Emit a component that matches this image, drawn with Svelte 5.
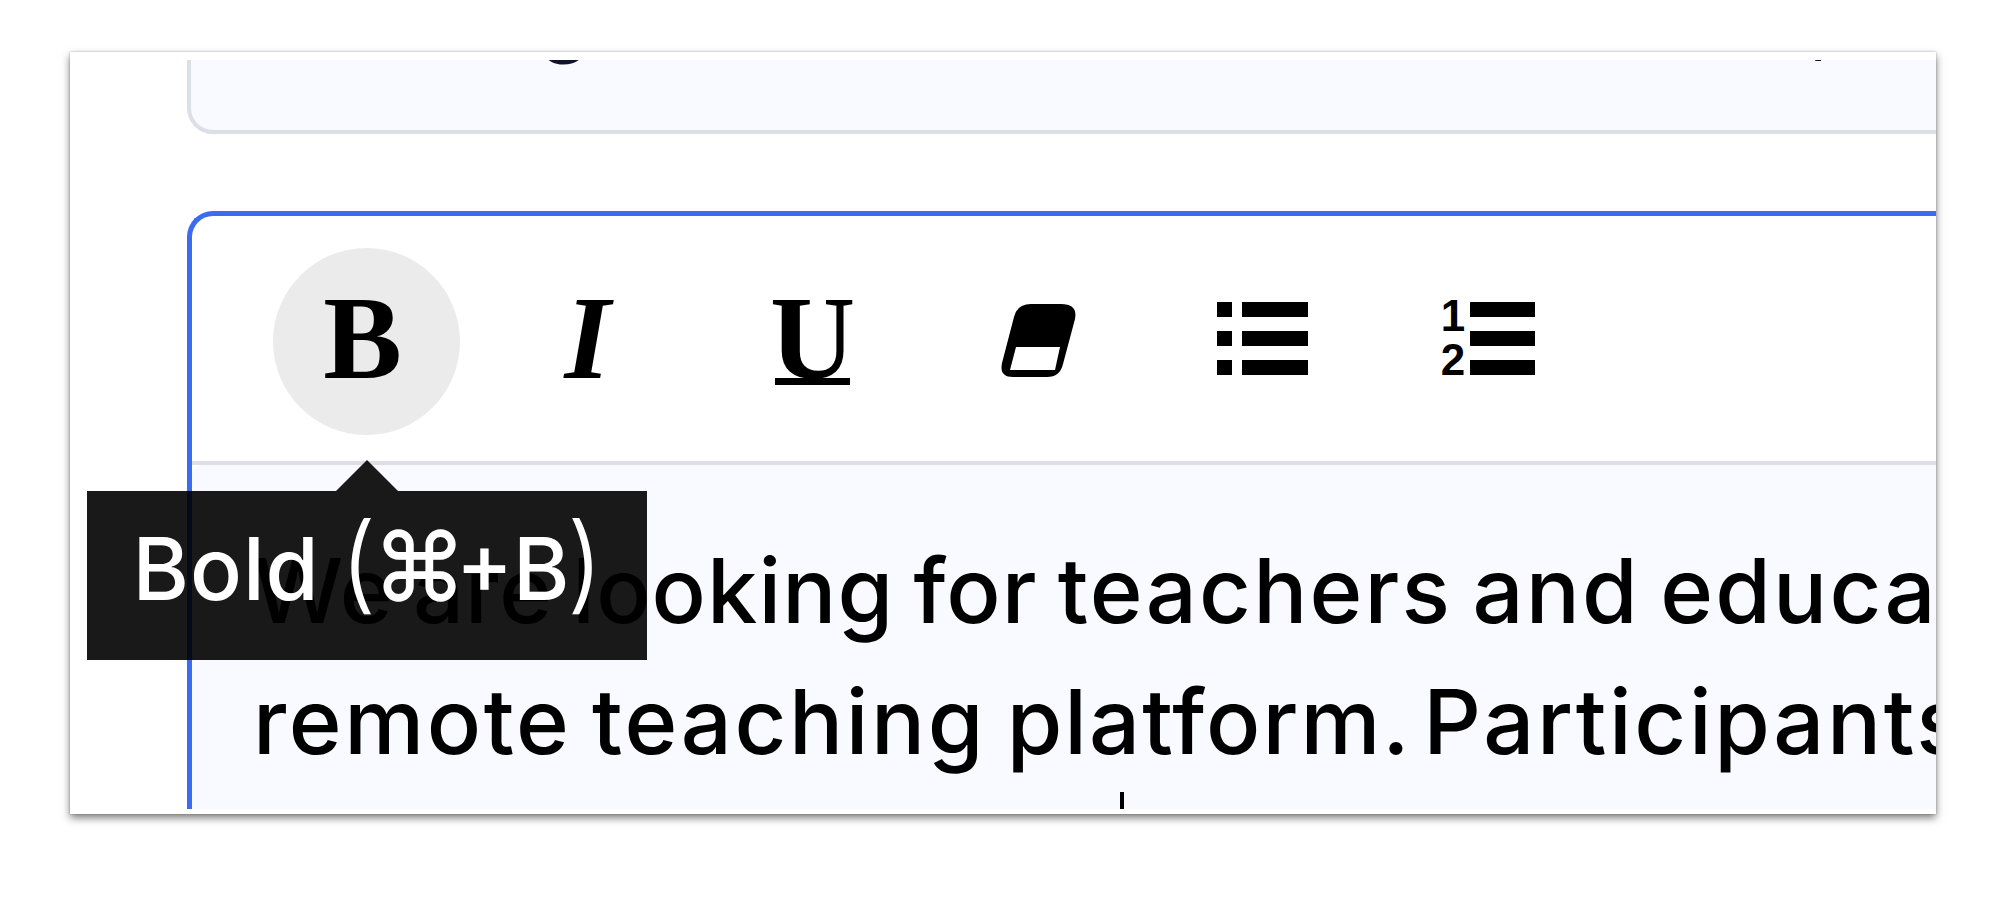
<script lang="ts">
	const listRows = [0, 29, 58];
</script>

<div class="page">
	<div class="window">
		<div class="scroller">
			<section class="card previous">
				<p class="tail"><span class="tail-g">g</span><span class="tail-comma">,</span></p>
			</section>

			<section class="card editor">
				<div class="toolbar">
					<button type="button" class="tool active">
						<span class="glyph bold">B</span>
						<span class="tooltip"><span class="word">Bold</span> <span class="paren open">(</span><span class="cmd">⌘</span>+B<span class="paren close">)</span></span>
					</button>
					<button type="button" class="tool"><span class="glyph italic">I</span></button>
					<button type="button" class="tool"><span class="glyph under">U</span></button>
					<button type="button" class="tool" aria-label="Clear formatting">
						<svg class="eraser" width="74" height="73" viewBox="0 0 74 73">
							<path
								fill-rule="evenodd"
								d="M30 0H60Q77 0 74 15L62 60Q59 73 46 73H12Q-2 73 1 59L13 13Q16 0 30 0ZM15 43H59L54 66H9Z"
							/>
						</svg>
					</button>
					<button type="button" class="tool" aria-label="Bulleted list">
						<svg width="91" height="73" viewBox="0 0 91 73">
							{#each listRows as y}
								<rect x="0" {y} width="15" height="15" />
								<rect x="25" {y} width="66" height="15" />
							{/each}
						</svg>
					</button>
					<button type="button" class="tool" aria-label="Numbered list">
						<svg width="94" height="74" viewBox="0 0 94 74">
							<text x="12" y="29" class="digit">1</text>
							<text x="12" y="73" class="digit">2</text>
							{#each listRows as y}
								<rect x="29" {y} width="65" height="15" />
							{/each}
						</svg>
					</button>
				</div>
				<div class="content">
					<p class="first"><span class="lead">We are looking for</span> teachers and educators</p>
					<p class="second">remote teaching <span class="platform">platform.</span> <span class="rest">Participants will</span></p>
					<div class="caret"></div>
				</div>
			</section>
		</div>
	</div>
</div>

<style>
	:global(body) {
		background: #fff;
	}

	.page {
		box-sizing: border-box;
		height: 906px;
		padding: 52px 70px 0;
	}

	.window {
		box-sizing: border-box;
		width: 1866px;
		height: 762px;
		padding: 8px 0 5px;
		background: #fff;
		box-shadow: 0 4px 8px rgba(0, 0, 0, 0.5), 0 0 2px rgba(0, 0, 0, 0.25);
		font-family: Inter, "Noto Sans", sans-serif;
		color: #000;
	}

	.scroller {
		height: 749px;
		overflow: hidden;
		padding-left: 117px;
	}

	.card {
		box-sizing: border-box;
		width: 1900px;
		border-radius: 26px;
	}

	.previous {
		height: 234px;
		margin-top: -160px;
		padding-top: 46px;
		background: #f9faff;
		border: 4px solid #dcdfe6;
	}

	.tail {
		display: flex;
		margin: 0;
		font-size: 86px;
		line-height: 131px;
		color: #12122e;
	}

	.tail-g {
		margin-left: 347px;
	}

	.tail-comma {
		margin-left: 1219px;
	}

	.editor {
		height: 700px;
		margin-top: 77px;
		border: 5px solid #3b6cf0;
		border-right: 0;
		background: #fff;
	}

	.toolbar {
		display: flex;
		gap: 38px;
		height: 249px;
		box-sizing: border-box;
		padding: 32px 0 0 81px;
		border-bottom: 4px solid #dcdfe6;
	}

	.tool {
		position: relative;
		display: flex;
		align-items: center;
		justify-content: center;
		flex: none;
		width: 187px;
		height: 187px;
		padding: 0 8px 6px 0;
		border: 0;
		border-radius: 50%;
		background: none;
		color: #000;
	}

	.tool svg {
		display: block;
		fill: #000;
		overflow: visible;
	}

	.tool svg.eraser {
		margin-top: 3px;
	}

	.tool.active {
		background: #ebebeb;
	}

	.glyph {
		display: block;
		font-family: "Liberation Serif", serif;
		font-size: 118px;
		font-weight: 700;
		line-height: 78px;
		height: 78px;
	}

	.italic {
		font-style: italic;
	}

	.under {
		height: 85px;
		margin-top: 7px;
		background: linear-gradient(#000, #000) 5px 78px / 75px 7px no-repeat;
	}

	.digit {
		font-family: "Liberation Sans", sans-serif;
		font-size: 44px;
		font-weight: 700;
		text-anchor: middle;
	}

	.tooltip {
		position: absolute;
		top: 243px;
		left: 50%;
		transform: translateX(-50%);
		z-index: 2;
		box-sizing: border-box;
		width: 560px;
		height: 169px;
		padding-left: 46px;
		background: rgba(0, 0, 0, 0.9);
		color: #fff;
		font-family: Inter, "Noto Sans", sans-serif;
		font-size: 86px;
		font-weight: 450;
		line-height: 156px;
		text-align: left;
		white-space: nowrap;
	}

	.tooltip::before {
		content: "";
		position: absolute;
		top: -31px;
		left: 249px;
		border-left: 31px solid transparent;
		border-right: 31px solid transparent;
		border-bottom: 31px solid rgba(0, 0, 0, 0.9);
	}

	.word {
		letter-spacing: 1px;
	}

	.paren {
		font-weight: 300;
		font-size: 106px;
		line-height: 0;
	}

	.open {
		margin-left: -3px;
		margin-right: -4px;
	}

	.close {
		margin-left: -3px;
	}

	.cmd {
		font-size: 95px;
		line-height: 0;
		margin-right: -11px;
	}

	.content {
		padding: 60px 0 0 61px;
		height: 400px;
		background: #f9faff;
		border-top-left-radius: 10px;
		font-size: 90px;
		font-weight: 450;
		word-spacing: -6px;
		line-height: 131px;
	}

	.content p {
		margin: 0;
		white-space: nowrap;
	}

	.content .first {
		letter-spacing: 2.2px;
	}

	.content .lead {
		letter-spacing: 1.1px;
	}

	.content .second {
		letter-spacing: 2.6px;
	}

	.content .platform {
		letter-spacing: 2px;
	}

	.content .rest {
		margin-left: -9px;
	}

	.caret {
		width: 4px;
		height: 30px;
		margin: 5px 0 0 867px;
		background: #000;
	}
</style>
